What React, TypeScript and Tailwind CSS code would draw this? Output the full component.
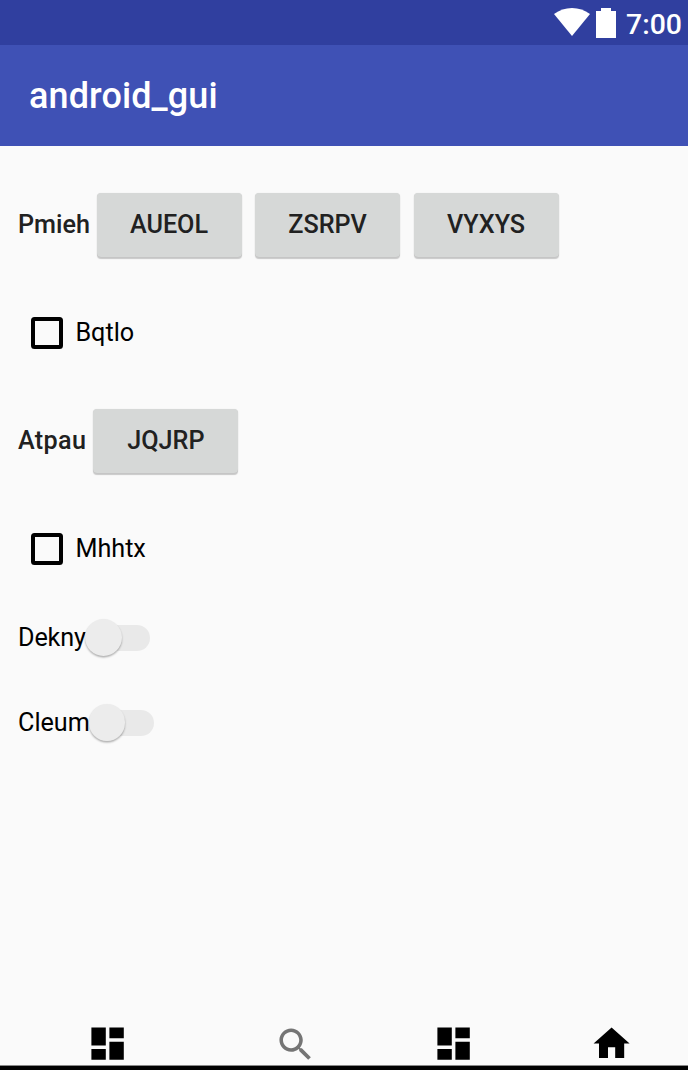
import type { ReactNode } from "react";

const textBase = "whitespace-pre text-[25.2px] leading-[30px]";

function PushButton({ label }: { label: string }) {
  return (
    <button
      type="button"
      className="h-[64px] w-[145px] shrink-0 rounded-[4px] bg-[#d6d8d7] text-center text-[25.2px] leading-[30px] font-medium text-[#212121] shadow-[0_1.5px_1px_rgba(0,0,0,0.2),0_0_1px_rgba(0,0,0,0.12)]"
    >
      {label}
    </button>
  );
}

function ButtonRow({ label, labelClass, children }: { label: string; labelClass: string; children: ReactNode }) {
  return (
    <div className="flex h-[108px] items-center pl-[18px]">
      <span className={`${textBase} ${labelClass} shrink-0 font-medium text-[#212121]`}>{label}</span>
      <div className="flex gap-[13.5px]">{children}</div>
    </div>
  );
}

function CheckRow({ label }: { label: string }) {
  return (
    <label className="flex h-[108px] items-center pl-[31px]">
      <span className="h-[32px] w-[32px] shrink-0 rounded-[3.5px] border-4 border-black" />
      <span className={`${textBase} ml-[12.4px] text-black`}>{label}</span>
    </label>
  );
}

function SwitchRow({ label, width }: { label: string; width: string }) {
  return (
    <div className="flex h-[85px] items-center pl-[18px]">
      <span className={`${textBase} ${width} shrink-0 text-black`}>{label}</span>
      <span role="switch" aria-checked="false" className="relative flex h-[37px] w-[65px] items-center justify-end">
        <span className="h-[26px] w-[51px] rounded-full bg-[#e9e9e9]" />
        <span className="absolute top-0 left-0 h-[36.6px] w-[36.6px] rounded-full bg-[#ececec] shadow-[0_1.5px_2px_rgba(0,0,0,0.3)]" />
      </span>
    </div>
  );
}

function NavIcon({ d, className }: { d: string; className: string }) {
  return (
    <svg viewBox="0 0 24 24" className={`h-[43.2px] w-[43.2px] shrink-0 ${className}`} fill="currentColor">
      <path d={d} />
    </svg>
  );
}

const dashboard = "M3 13h8V3H3v10zm0 8h8v-6H3v6zm10 0h8V11h-8v10zm0-18v6h8V3h-8z";
const search =
  "M15.5 14h-.79l-.28-.27C15.41 12.59 16 11.11 16 9.5 16 5.91 13.09 3 9.5 3S3 5.91 3 9.5 5.91 16 9.5 16c1.61 0 3.09-.59 4.23-1.57l.27.28v.79l5 4.99L20.49 19l-4.99-5zm-6 0C7.01 14 5 11.99 5 9.5S7.01 5 9.5 5 14 7.01 14 9.5 11.99 14 9.5 14z";
const home = "M10 20v-6h4v6h5v-8h3L12 3 2 12h3v8z";

export default function App() {
  return (
    <div className="flex h-[1070px] w-[688px] flex-col overflow-hidden bg-[#fafafa] font-['Roboto',sans-serif]">
      <div className="flex h-[45px] shrink-0 items-start justify-end bg-[#303f9f] pr-[6px] text-white">
        <svg viewBox="0 0 36 28" className="mt-[8px] h-[28px] w-[36px]" fill="currentColor">
          <path d="M0 6Q8 0 18 0t18 6L18 28z" />
        </svg>
        <svg viewBox="0 0 20 30" className="mt-[8px] ml-[6px] h-[30px] w-[20px]" fill="currentColor">
          <path d="M5 0h10v3h5v27H0V3H5z" />
        </svg>
        <span className="mt-[8px] ml-[10px] text-[28.4px] leading-[34px] font-medium">7:00</span>
      </div>
      <header className="flex h-[101px] shrink-0 items-center bg-[#3f51b5] pl-[29px]">
        <h1 className="text-[36px] leading-[42px] font-medium tracking-[0.1px] text-white">android_gui</h1>
      </header>
      <main className="flex flex-1 flex-col pt-[25px]">
        <ButtonRow label="Pmieh" labelClass="w-[78.5px]">
          <PushButton label="AUEOL" />
          <PushButton label="ZSRPV" />
          <PushButton label="VYXYS" />
        </ButtonRow>
        <CheckRow label="Bqtlo" />
        <ButtonRow label="Atpau" labelClass="w-[75.4px] tracking-[0.35px]">
          <PushButton label="JQJRP" />
        </ButtonRow>
        <CheckRow label="Mhhtx" />
        <div className="-mt-[8px]">
          <SwitchRow label="Dekny" width="w-[67px] tracking-[-0.15px]" />
          <SwitchRow label="Cleum" width="w-[70.8px]" />
        </div>
      </main>
      <nav className="flex h-[43px] shrink-0 pl-[86.4px] text-black">
        <NavIcon d={dashboard} className="" />
        <NavIcon d={search} className="mt-[0.5px] ml-[144.3px] text-[#757575]" />
        <NavIcon d={dashboard} className="ml-[114.6px]" />
        <NavIcon d={home} className="ml-[115.5px]" />
      </nav>
      <div className="h-[5px] shrink-0 border-t border-[#888888] bg-black" />
    </div>
  );
}
